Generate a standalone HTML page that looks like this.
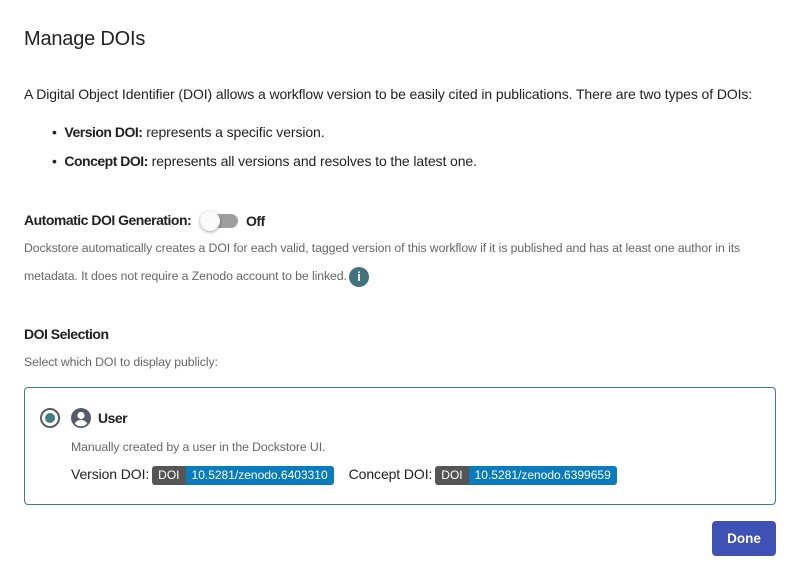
<!DOCTYPE html>
<html><head><style>
html,body{margin:0;padding:0;width:800px;height:573px;overflow:hidden;background:#fff;font-family:"Liberation Sans",sans-serif;color:#212121}
.abs{position:absolute;white-space:nowrap}
h1{position:absolute;left:24px;top:28px;margin:0;font-size:20px;font-weight:normal;letter-spacing:-0.2px;color:#222}
.p{font-size:14px;letter-spacing:-0.1px}
.s{font-size:12.3px;color:#666;letter-spacing:-0.1px}
b{font-weight:bold;letter-spacing:-0.5px}
.badge{display:inline-flex;height:19px;font-size:12px;vertical-align:middle;border-radius:3px;overflow:hidden;line-height:19px;letter-spacing:0}
.badge .l{background:#555;color:#fff;padding:0 6px}
.badge .r{background:#0a7bbd;color:#fff;padding:0 6px}
</style></head><body>
<h1>Manage DOIs</h1>
<div class="abs p" style="left:24px;top:86px">A Digital Object Identifier (DOI) allows a workflow version to be easily cited in publications. There are two types of DOIs:</div>
<div class="abs p" style="left:52px;top:124px">• &nbsp;<b>Version DOI:</b> represents a specific version.</div>
<div class="abs p" style="left:52px;top:153px">• &nbsp;<b>Concept DOI:</b> represents all versions and resolves to the latest one.</div>
<div class="abs p" style="left:24px;top:212px"><b>Automatic DOI Generation:</b></div>
<div class="abs" style="left:204px;top:214px;width:34px;height:14px;border-radius:7px;background:#9e9e9e"></div>
<div class="abs" style="left:200px;top:211px;width:20px;height:20px;border-radius:10px;background:#fafafa;box-shadow:0 1px 3px rgba(0,0,0,.4)"></div>
<div class="abs p" style="left:246px;top:213px"><b>Off</b></div>
<div class="abs s" style="left:24px;top:241px">Dockstore automatically creates a DOI for each valid, tagged version of this workflow if it is published and has at least one author in its</div>
<div class="abs s" style="left:24px;top:269px">metadata. It does not require a Zenodo account to be linked.</div>
<div class="abs" style="left:349px;top:267px;width:20px;height:20px;border-radius:10px;background:#42737b;color:#fff;font-size:13px;font-weight:bold;text-align:center;line-height:20px">i</div>
<div class="abs p" style="left:24px;top:326px"><b>DOI Selection</b></div>
<div class="abs s" style="left:24px;top:355px">Select which DOI to display publicly:</div>
<div class="abs" style="left:24px;top:387px;width:750px;height:116px;border:1px solid #3d7d86;border-radius:4px"></div>
<div class="abs" style="left:40px;top:408px;width:16px;height:16px;border:2px solid #555e66;border-radius:50%"></div>
<div class="abs" style="left:45px;top:413px;width:10px;height:10px;border-radius:50%;background:#3d7d86"></div>
<svg class="abs" style="left:70px;top:407px" width="22" height="22" viewBox="0 0 22 22"><circle cx="11" cy="11" r="10" fill="#555a6e"/><circle cx="11" cy="8.5" r="3.6" fill="#fff"/><path d="M4.8 16.5c1.5-2.6 3.6-3.6 6.2-3.6s4.7 1 6.2 3.6c-1.6 1.9-3.7 2.8-6.2 2.8s-4.6-.9-6.2-2.8z" fill="#fff"/></svg>
<div class="abs p" style="left:98px;top:410px"><b>User</b></div>
<div class="abs s" style="left:71px;top:440px">Manually created by a user in the Dockstore UI.</div>
<div class="abs p" style="left:71px;top:466px">Version DOI:<span class="badge" style="margin-left:3px"><span class="l">DOI</span><span class="r">10.5281/zenodo.6403310</span></span><span style="display:inline-block;width:15px"></span>Concept DOI:<span class="badge" style="margin-left:3px"><span class="l">DOI</span><span class="r">10.5281/zenodo.6399659</span></span></div>
<div class="abs" style="left:712px;top:521px;width:64px;height:35px;border-radius:4px;background:#3f51b5;color:#fff;font-size:13.5px;font-weight:bold;text-align:center;line-height:35px">Done</div>
</body></html>
